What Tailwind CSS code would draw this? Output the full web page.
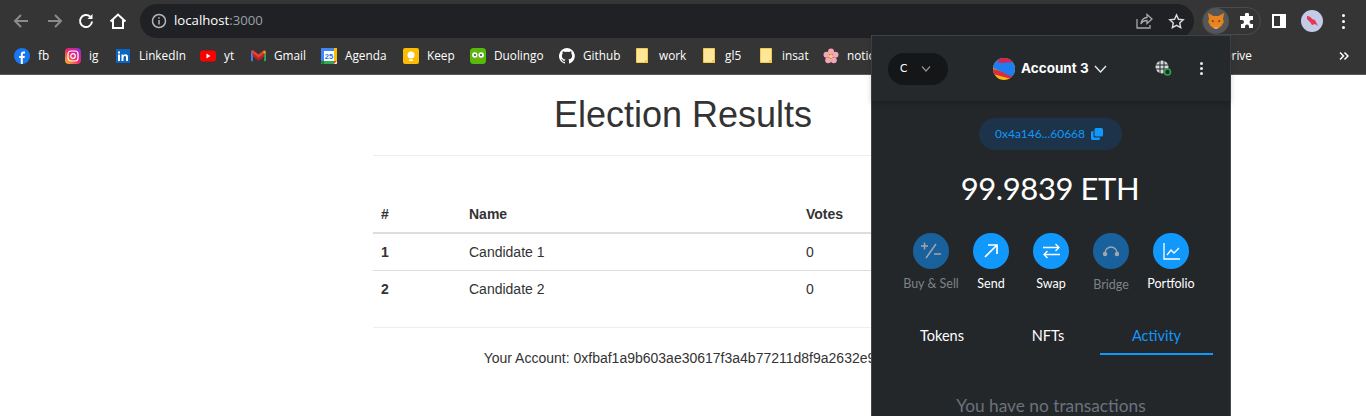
<!DOCTYPE html>
<html lang="en">
<head>
    <meta charset="UTF-8">
    <meta name="viewport" content="width=device-width, initial-scale=1.0">
    <title>Election Results</title>
    <script src="https://cdn.jsdelivr.net/npm/@tailwindcss/browser@4"></script>
</head>
<body class="relative h-[416px] w-[1366px] overflow-hidden bg-white font-['Liberation_Sans',sans-serif]">
    <!-- browser toolbar -->
    <div class="flex h-[38px] items-center bg-[#353535] pl-[12px] pt-[4px]">
        <div class="flex w-[128px] items-center">
            <svg class="mr-[16px] h-[18px] w-[18px]" viewBox="0 0 18 18" fill="none" stroke="#8a8b8c" stroke-width="2"><path d="M16 9H3M9 3L3 9l6 6"/></svg>
            <svg class="mr-[13px] h-[18px] w-[18px]" viewBox="0 0 18 18" fill="none" stroke="#8a8b8c" stroke-width="2"><path d="M2 9h13M9 3l6 6-6 6"/></svg>
            <svg class="mr-[14px] h-[18px] w-[18px]" viewBox="0 0 18 18" fill="none" stroke="#fff" stroke-width="2"><path d="M15 9.500A6 6 0 1 1 13.200 4.700"/><path d="M15.500 2v5h-5" fill="#fff" stroke="none"/></svg>
            <svg class="h-[18px] w-[18px]" viewBox="0 0 18 18" fill="none" stroke="#fff" stroke-width="2"><path d="M1.500 9.500L9 2.500l7.500 7M4 8v8h10V8"/></svg>
        </div>
        <div class="flex h-[34px] w-[1054px] items-center rounded-full bg-[#202124] pl-[11px]">
            <svg class="mr-[7px] h-[16px] w-[16px]" viewBox="0 0 16 16" fill="none" stroke="#b5b6b8" stroke-width="1.500"><circle cx="8" cy="8" r="6.500"/><path d="M8 7v4.500M8 4.200v1.600"/></svg>
            <span class="font-['Open_Sans',sans-serif] text-[13.200px] text-white">localhost<span class="text-[#9aa0a6]">:3000</span></span>
            <svg class="ml-auto mr-[15px] h-[18px] w-[18px]" viewBox="0 0 18 18" fill="none" stroke="#a8a9ab" stroke-width="1.300"><path d="M2 7v9h13v-3M6 12c0-4 3-6.500 6-6.500V2.500l5 4.500-5 4.500V8.500c-2.500 0-5 1-6 3.500z"/></svg>
            <svg class="mr-[9px] h-[17px] w-[17px]" viewBox="0 0 18 18" fill="none" stroke="#dadce0" stroke-width="1.500"><path d="M9 2l2.100 4.600 5 .6-3.700 3.400 1 5L9 13.100 4.600 15.600l1-5L1.900 7.200l5-.6z"/></svg>
        </div>
        <div class="ml-[8px] flex h-[28px] w-[59px] items-center rounded-full border border-[#4a4a4a]">
            <div class="flex h-[26px] w-[26px] items-center justify-center rounded-full bg-[#565656]">
                <svg class="h-[18px] w-[18px]" viewBox="0 0 18 18"><path d="M1 1l5.500 3h5L17 1l-1 6 .8 3-2.300 4L11 16.500H7L3.500 14 1.200 10 2 7z" fill="#e8821e"/><path d="M6 10l3 6.500 3-6.500 2-1-3 7H7L4 9z" fill="#f6851b"/><path d="M7 15h4l-1 2H8z" fill="#c0ad9e"/><path d="M4.500 8l2.500 1-1 1.500zM13.500 8l-2.500 1 1 1.500z" fill="#233447"/></svg>
            </div>
            <svg class="ml-[10px] h-[16px] w-[16px]" viewBox="0 0 16 16" fill="#fff"><path d="M6 1.500a2 2 0 0 1 4 0V3h4v4h-1.500a2 2 0 0 0 0 4H14v4h-4v-1.500a2 2 0 0 0-4 0V15H2v-4h1a2 2 0 0 0 0-4H1V3h5z"/></svg>
        </div>
        <svg class="ml-[11px] h-[14px] w-[14px]" viewBox="0 0 14 14"><path d="M0 0h14v14H0z" fill="#fff"/><path d="M2 2h6v10H2z" fill="#353535"/></svg>
        <div class="ml-[15px] flex h-[22px] w-[22px] items-center justify-center rounded-full bg-[#c5cae9]">
            <svg class="h-[14px] w-[14px]" viewBox="0 0 14 14"><path d="M2 2c2 0 4 1 5 3l3 1 3 6-3-2-3 1-2-3-3-3z" fill="#e53950"/></svg>
        </div>
        <div class="ml-[19px] flex flex-col gap-[3px]">
            <span class="h-[3px] w-[3px] rounded-full bg-white"></span>
            <span class="h-[3px] w-[3px] rounded-full bg-white"></span>
            <span class="h-[3px] w-[3px] rounded-full bg-white"></span>
        </div>
    </div>

    <!-- bookmarks bar -->
    <div class="flex h-[37px] items-center border-b border-[#5a5a5a] bg-[#353535] pb-[1px] pl-[14px] pr-[17px] font-['Open_Sans',sans-serif] text-[11.800px] text-white">
        <div class="flex w-[51px] items-center gap-[8px]">
            <svg class="h-[16px] w-[16px]" viewBox="0 0 16 16"><circle cx="8" cy="8" r="8" fill="#1877f2"/><path d="M6.800 16V10H5V8h1.800V6.300C6.800 4.400 8 3.500 9.500 3.500l1.500.1v1.800h-1c-.9 0-1.200.5-1.200 1.100V8h2.100l-.4 2H8.800v6z" fill="#fff"/></svg>
            <span>fb</span>
        </div>
        <div class="flex w-[51px] items-center gap-[8px]">
            <svg class="h-[16px] w-[16px]" viewBox="0 0 16 16"><defs><linearGradient id="ig" x1="0" y1="1" x2="1" y2="0"><stop offset="0" stop-color="#fdc41f"/><stop offset=".5" stop-color="#f0256d"/><stop offset="1" stop-color="#8b29e8"/></linearGradient></defs><rect width="16" height="16" rx="4" fill="url(#ig)"/><rect x="3" y="3" width="10" height="10" rx="3" fill="none" stroke="#fff" stroke-width="1.200"/><circle cx="8" cy="8" r="2.300" fill="none" stroke="#fff" stroke-width="1.200"/></svg>
            <span>ig</span>
        </div>
        <div class="flex w-[84px] items-center gap-[9px]">
            <svg class="h-[14px] w-[14px]" viewBox="0 0 14 14"><rect width="14" height="14" fill="#0a66c2"/><path d="M2 5.500h2V12H2zM2 2.500h2v2H2zM5.500 5.500h2v1c.5-.8 1.200-1.200 2.100-1.200 1.700 0 2.400 1 2.400 2.800V12h-2V8.500c0-1-.3-1.500-1.100-1.500s-1.400.6-1.400 1.600V12h-2z" fill="#fff"/></svg>
            <span>LinkedIn</span>
        </div>
        <div class="flex w-[51px] items-center gap-[8px]">
            <svg class="h-[16px] w-[16px]" viewBox="0 0 16 16"><rect y="2.500" width="16" height="11" rx="3" fill="#f00"/><path d="M6.500 5.500l4 2.500-4 2.500z" fill="#fff"/></svg>
            <span>yt</span>
        </div>
        <div class="flex w-[70px] items-center gap-[8px]">
            <svg class="h-[15px] w-[15px]" viewBox="0 0 16 16"><path d="M0 4l2 1v9H1a1 1 0 0 1-1-1z" fill="#4285f4"/><path d="M16 4l-2 1v9h1a1 1 0 0 0 1-1z" fill="#34a853"/><path d="M2 5v4l6 4.500V9z" fill="#c5221f"/><path d="M14 5v4L8 13.500V9z" fill="#c5221f"/><path d="M0 4c0-1.500 1.500-2 2.500-1.300L8 7l5.500-4.300C14.500 2 16 2.500 16 4l-8 6z" fill="#ea4335"/><path d="M13 3.500l3 .5-2 2z" fill="#fbbc04"/></svg>
            <span>Gmail</span>
        </div>
        <div class="flex w-[82px] items-center gap-[8px]">
            <svg class="h-[16px] w-[16px]" viewBox="0 0 16 16"><rect width="16" height="16" rx="1" fill="#fff"/><path d="M0 0h13v3H3v10H0z" fill="#4285f4"/><path d="M13 0h3v13h-3z" fill="#fbbc04"/><path d="M3 13h10v3H3z" fill="#34a853"/><path d="M13 13h3l-3 3z" fill="#ea4335"/><path d="M0 13h3v3H1a1 1 0 0 1-1-1z" fill="#188038"/><text x="8" y="11" font-size="7.500" font-weight="700" text-anchor="middle" fill="#1a73e8" font-family="Liberation Sans">25</text></svg>
            <span>Agenda</span>
        </div>
        <div class="flex w-[67px] items-center gap-[8px]">
            <svg class="h-[16px] w-[16px]" viewBox="0 0 16 16"><rect width="16" height="16" rx="2" fill="#fbbc04"/><circle cx="8" cy="7" r="3.500" fill="#fff"/><path d="M6 11.500h4V13H6z" fill="#fff"/></svg>
            <span>Keep</span>
        </div>
        <div class="flex w-[89px] items-center gap-[8px]">
            <svg class="h-[16px] w-[16px]" viewBox="0 0 16 16"><rect width="16" height="16" rx="3.500" fill="#58b90a"/><circle cx="4.800" cy="7" r="2.700" fill="#fff"/><circle cx="11.200" cy="7" r="2.700" fill="#fff"/><circle cx="5" cy="7" r="1" fill="#3c3c3c"/><circle cx="11" cy="7" r="1" fill="#3c3c3c"/><path d="M6.800 9.500h2.400L8 11.500z" fill="#f49000"/></svg>
            <span>Duolingo</span>
        </div>
        <div class="flex w-[77px] items-center gap-[8px]">
            <svg class="h-[16px] w-[16px]" viewBox="0 0 16 16" fill="#fff"><path d="M8 0a8 8 0 0 0-2.500 15.600c.4.100.5-.2.500-.4v-1.400c-2.200.5-2.700-1-2.700-1-.4-.9-.9-1.200-.9-1.200-.7-.5.100-.5.100-.5.800.1 1.200.8 1.200.8.700 1.200 1.900.9 2.300.7.100-.5.300-.9.500-1.100-1.800-.2-3.600-.9-3.600-4 0-.9.300-1.600.8-2.100-.1-.2-.4-1 .1-2.100 0 0 .7-.2 2.200.8a7.600 7.600 0 0 1 4 0c1.500-1 2.200-.8 2.200-.8.400 1.100.2 1.900.1 2.100.5.600.8 1.300.8 2.100 0 3.100-1.900 3.700-3.700 3.900.3.300.6.700.6 1.500v2.200c0 .2.100.5.600.4A8 8 0 0 0 8 0z"/></svg>
            <span>Github</span>
        </div>
        <div class="flex w-[67px] items-center gap-[11px]">
            <svg class="h-[15px] w-[12px]" viewBox="0 0 12 15"><path d="M.5.500h11v14H.5z" fill="#fee79a" stroke="#f5c94b"/><path d="M9 12h3v3H9z" fill="#f5c94b"/></svg>
            <span>work</span>
        </div>
        <div class="flex w-[57px] items-center gap-[10px]">
            <svg class="h-[15px] w-[12px]" viewBox="0 0 12 15"><path d="M.5.500h11v14H.5z" fill="#fee79a" stroke="#f5c94b"/><path d="M9 12h3v3H9z" fill="#f5c94b"/></svg>
            <span>gl5</span>
        </div>
        <div class="flex w-[63px] items-center gap-[10px]">
            <svg class="h-[15px] w-[12px]" viewBox="0 0 12 15"><path d="M.5.500h11v14H.5z" fill="#fee79a" stroke="#f5c94b"/><path d="M9 12h3v3H9z" fill="#f5c94b"/></svg>
            <span>insat</span>
        </div>
        <div class="flex w-[400px] items-center gap-[8px]">
            <svg class="h-[16px] w-[16px]" viewBox="0 0 16 16"><g fill="#f4a6b4"><circle cx="8" cy="3.500" r="3"/><circle cx="12.500" cy="6.800" r="3"/><circle cx="10.800" cy="12.200" r="3"/><circle cx="5.200" cy="12.200" r="3"/><circle cx="3.500" cy="6.800" r="3"/></g><circle cx="8" cy="8.300" r="2" fill="#f9d06b"/></svg>
            <span>notion</span>
        </div>
        <span>Drive</span>
        <svg class="ml-auto h-[10px] w-[10px]" viewBox="0 0 10 10" fill="none" stroke="#fff" stroke-width="1.500"><path d="M1 1.500L4.500 5 1 8.500M5.500 1.500L9 5 5.500 8.500"/></svg>
    </div>

    <!-- page -->
    <div class="mx-auto w-[620px] text-[14px] leading-[20px] text-[#333]">
        <h1 class="pb-[20px] pt-[20px] text-center text-[36px] leading-[40px]">Election Results</h1>
        <hr class="border-[#eee]">
        <table class="mt-[39px] w-full text-left">
            <thead>
                <tr class="h-[38px] border-b-2 border-[#ddd]">
                    <th class="w-[88px] pl-[8px] font-bold">#</th>
                    <th class="w-[337px] pl-[8px] font-bold">Name</th>
                    <th class="pl-[8px] font-bold">Votes</th>
                </tr>
            </thead>
            <tbody>
                <tr class="h-[37px] border-b border-[#ddd]">
                    <th class="pl-[8px] font-bold">1</th>
                    <td class="pl-[8px]">Candidate 1</td>
                    <td class="pl-[8px]">0</td>
                </tr>
                <tr class="h-[37px]">
                    <th class="pl-[8px] font-bold">2</th>
                    <td class="pl-[8px]">Candidate 2</td>
                    <td class="pl-[8px]">0</td>
                </tr>
            </tbody>
        </table>
        <hr class="mt-[20px] border-[#eee]">
        <p class="mt-[20px] text-center">Your Account: 0xfbaf1a9b603ae30617f3a4b77211d8f9a2632e9c</p>
    </div>

    <!-- wallet popup -->
    <div class="absolute left-[871px] top-[35px] h-[381px] w-[360px] border-l border-r border-t border-[#43474b] bg-[#24272a] font-['Lato',sans-serif] text-white">
        <div class="flex h-[65px] items-center bg-[#25292c] pl-[16px] pr-[27px] shadow-[0_2px_6px_rgba(0,0,0,0.25)]">
            <div class="flex h-[32px] w-[60px] items-center rounded-full bg-[#141618] pl-[12px] text-[11px]">
                <span>C</span>
                <svg class="ml-[14px] h-[8px] w-[10px]" viewBox="0 0 10 8" fill="none" stroke="#8d9195" stroke-width="1.200"><path d="M1 1.500l4 4.500 4-4.500"/></svg>
            </div>
            <svg class="ml-[45px] h-[22px] w-[22px]" viewBox="0 0 22 22"><defs><clipPath id="av"><circle cx="11" cy="11" r="11"/></clipPath></defs><g clip-path="url(#av)"><rect width="22" height="22" fill="#f5b70f"/><path d="M0 16L22 22V17L0 11z" fill="#dd2a3d"/><path d="M0 0h22v20L0 10z" fill="#1e7df0"/><path d="M4 0h18v4L6 5z" fill="#d6244f"/></g></svg>
            <span class="ml-[6px] font-['Inter',sans-serif] text-[13.500px] font-bold">Account 3</span>
            <svg class="ml-[5px] h-[8px] w-[13px]" viewBox="0 0 13 8" fill="none" stroke="#e8e9ea" stroke-width="1.400"><path d="M1 1l5.500 6L12 1"/></svg>
            <svg class="ml-[48px] h-[17px] w-[17px]" viewBox="0 0 17 17"><circle cx="7" cy="7" r="6.500" fill="#d6d9dc"/><path d="M0 5h14M0 9h14M5 0v14M9 0v14" stroke="#25292c" stroke-width="1"/><circle cx="12.500" cy="12" r="3" fill="#25292c" stroke="#28a745" stroke-width="1.600"/></svg>
            <div class="ml-auto flex flex-col gap-[2px]">
                <span class="h-[3px] w-[3px] rounded-full bg-[#e8e9ea]"></span>
                <span class="h-[3px] w-[3px] rounded-full bg-[#e8e9ea]"></span>
                <span class="h-[3px] w-[3px] rounded-full bg-[#e8e9ea]"></span>
            </div>
        </div>
        <div class="ml-[107px] mt-[17px] flex h-[32px] w-[143px] items-center rounded-full bg-[#1c3349] pl-[16px] text-[12px] text-[#1098fc]">
            <span>0x4a146...60668</span>
            <svg class="ml-[6px] h-[12px] w-[12px]" viewBox="0 0 12 12" fill="#1098fc"><rect x="3.500" width="8.500" height="8.500" rx="1.500"/><path d="M0 4.500A1.500 1.500 0 0 1 1.500 3H2.500v5A1.500 1.500 0 0 0 4 9.500h5v1A1.500 1.500 0 0 1 7.500 12h-6A1.500 1.500 0 0 1 0 10.500z"/></svg>
        </div>
        <p class="mt-[18px] pr-[2px] text-center text-[31px] leading-[40px] tracking-[-0.4px]">99.9839 ETH</p>
        <div class="mt-[25px] flex pl-[29px] text-[12.500px]">
            <div class="flex w-[60px] flex-col items-center gap-[6px] text-[#7d8287]">
                <div class="flex h-[36px] w-[36px] items-center justify-center rounded-full bg-[#19619c]">
                    <svg class="h-[20px] w-[20px]" viewBox="0 0 20 20" fill="none" stroke="#a2a6aa" stroke-width="1.500"><path d="M0 5h7M3.500 1.500v7M5 17L15 3M13 13h7"/></svg>
                </div>
                <span class="whitespace-nowrap">Buy &amp; Sell</span>
            </div>
            <div class="flex w-[60px] flex-col items-center gap-[6px]">
                <div class="flex h-[36px] w-[36px] items-center justify-center rounded-full bg-[#1098fc]">
                    <svg class="h-[16px] w-[16px]" viewBox="0 0 16 16" fill="none" stroke="#fff" stroke-width="1.700"><path d="M2 14L14 2M5 2h9v9"/></svg>
                </div>
                <span>Send</span>
            </div>
            <div class="flex w-[60px] flex-col items-center gap-[6px]">
                <div class="flex h-[36px] w-[36px] items-center justify-center rounded-full bg-[#1098fc]">
                    <svg class="h-[16px] w-[17px]" viewBox="0 0 17 16" fill="none" stroke="#fff" stroke-width="1.300"><path d="M0 4.500h16M12.500 1l3.500 3.500-3.500 3.500M17 11.500H1M4.500 8L1 11.500 4.500 15"/></svg>
                </div>
                <span>Swap</span>
            </div>
            <div class="flex w-[60px] flex-col items-center gap-[7px] text-[#7d8287]">
                <div class="flex h-[36px] w-[36px] items-center justify-center rounded-full bg-[#19619c]">
                    <svg class="h-[12px] w-[16px]" viewBox="0 0 16 12" fill="none" stroke="#a2a6aa" stroke-width="1.300"><path d="M2 8a6 6 0 0 1 12 0"/><circle cx="2" cy="9" r="1.600" fill="#a2a6aa"/><circle cx="14" cy="9" r="1.600" fill="#a2a6aa"/></svg>
                </div>
                <span>Bridge</span>
            </div>
            <div class="flex w-[60px] flex-col items-center gap-[6px]">
                <div class="flex h-[36px] w-[36px] items-center justify-center rounded-full bg-[#1098fc]">
                    <svg class="h-[17px] w-[17px]" viewBox="0 0 17 17" fill="none" stroke="#fff" stroke-width="1.300"><path d="M1 0v16h16M4 12l4-5 3 3 5-5"/></svg>
                </div>
                <span>Portfolio</span>
            </div>
        </div>
        <div class="mt-[24px] flex pl-[16px] text-[14.500px]">
            <div class="flex h-[36px] w-[108px] items-start justify-center pt-[6px]">Tokens</div>
            <div class="flex h-[36px] w-[104px] items-start justify-center pt-[6px]">NFTs</div>
            <div class="flex h-[36px] w-[113px] items-start justify-center border-b-2 border-[#1098fc] pt-[6px] text-[#1098fc]">Activity</div>
        </div>
        <p class="mt-[39px] text-center text-[17.300px] leading-[24px] text-[#6a737d]">You have no transactions</p>
    </div>
</body>
</html>
